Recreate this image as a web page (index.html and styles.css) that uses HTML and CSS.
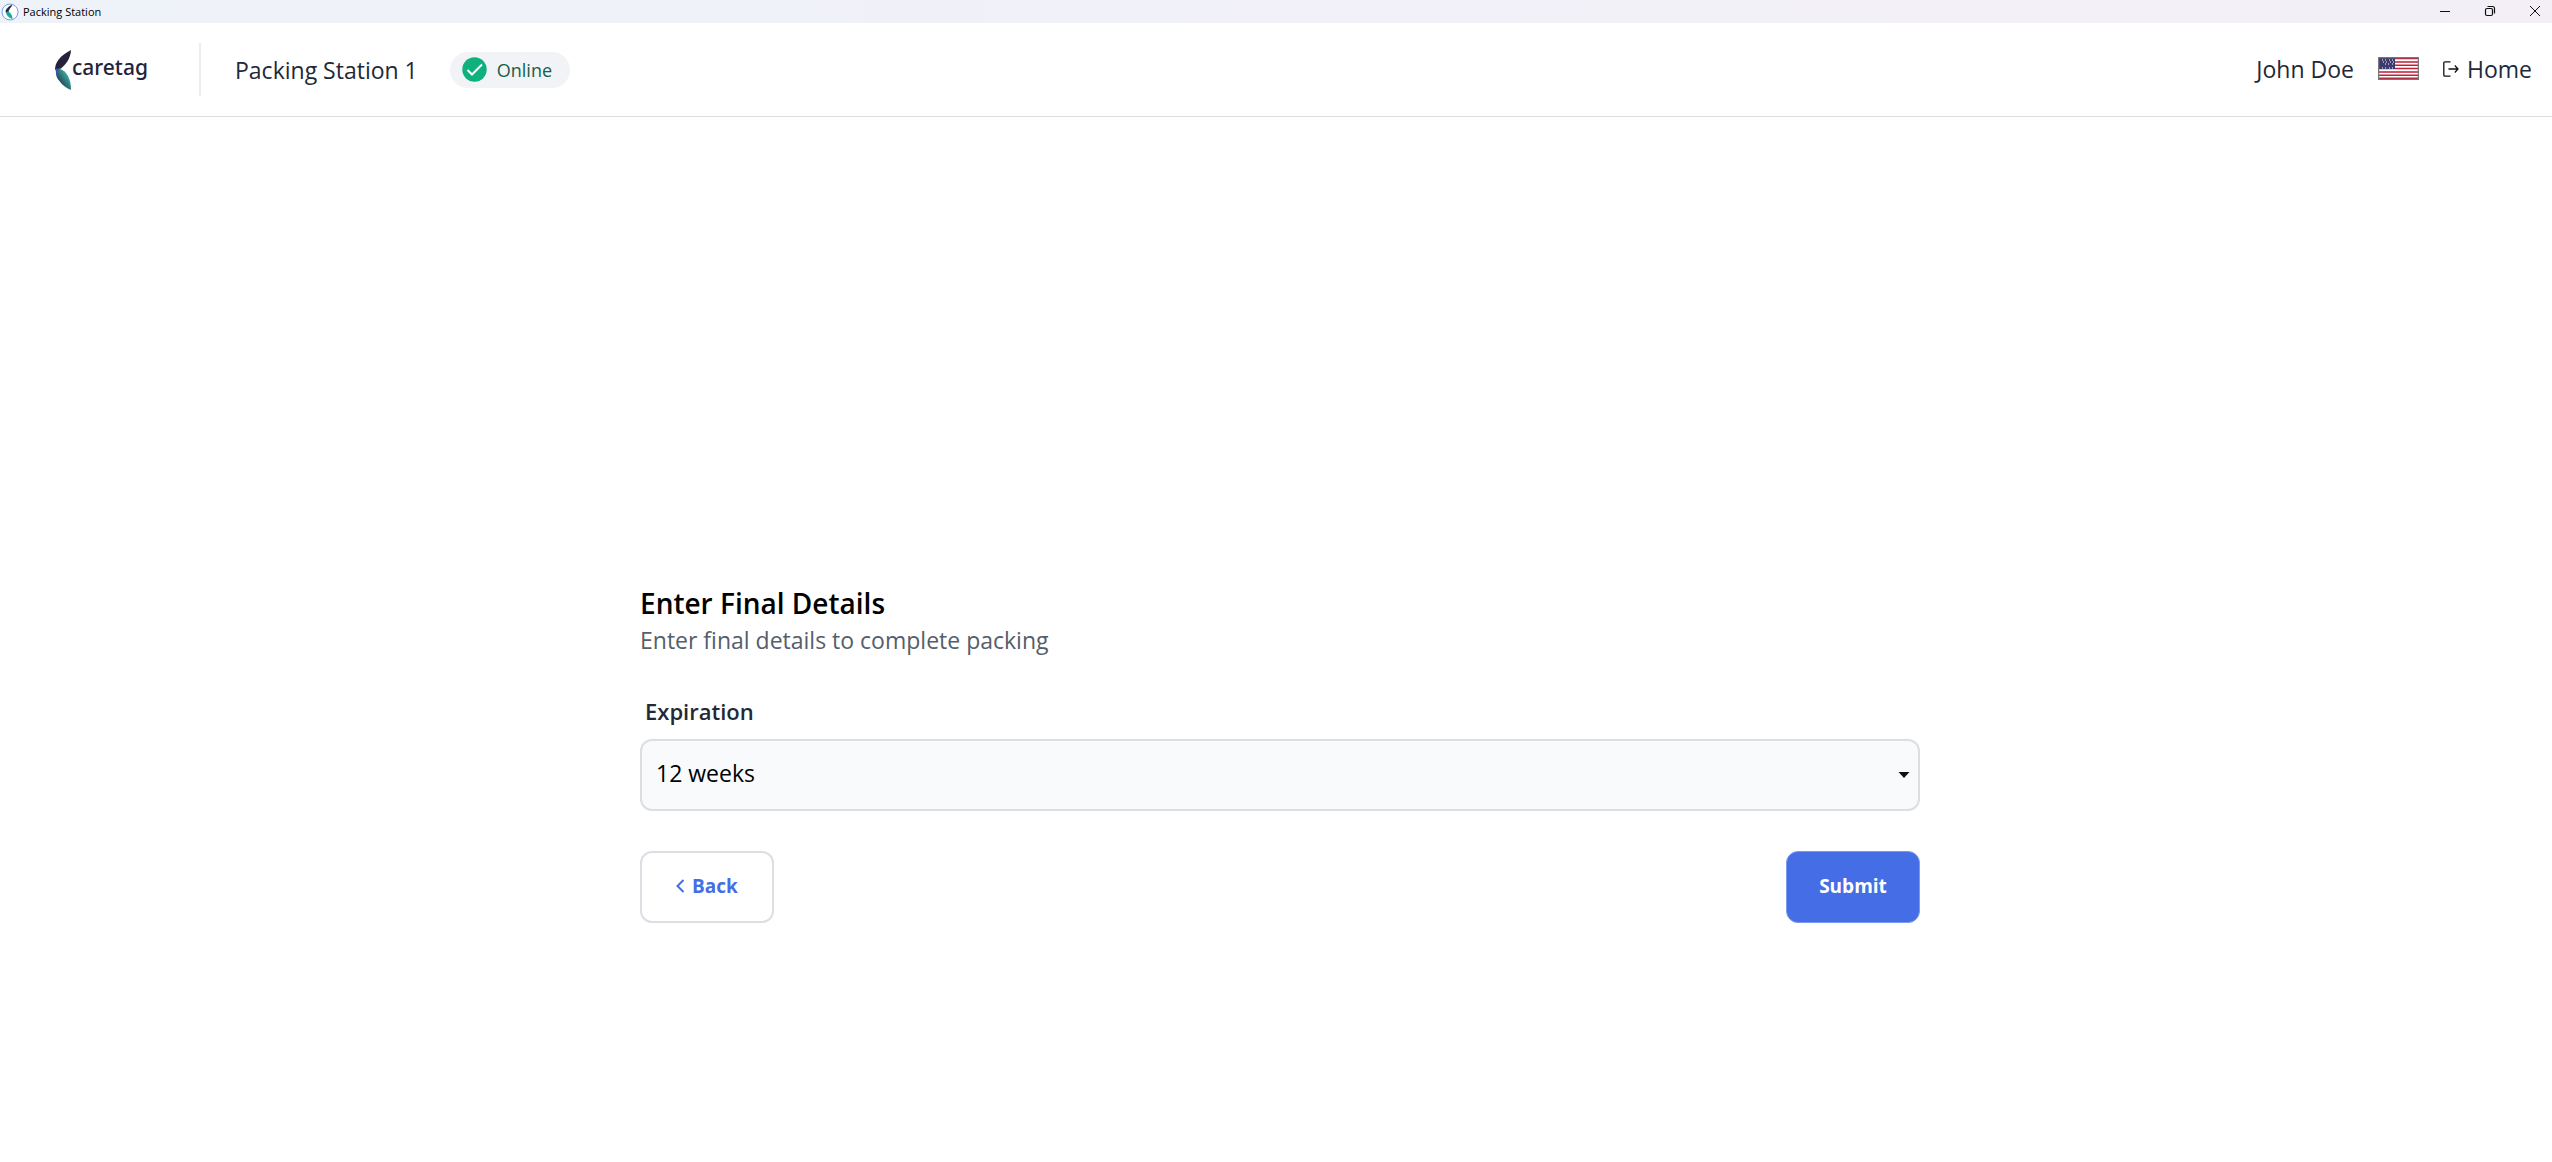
FILE: index.html
```html
<!DOCTYPE html>
<html lang="en">
<head>
<meta charset="utf-8">
<title>Packing Station</title>
<link rel="stylesheet" href="styles.css">
</head>
<body>
<div class="titlebar">
  <svg class="app-icon" width="18" height="18" viewBox="0 0 18 18" aria-hidden="true">
    <circle cx="9" cy="9" r="8" fill="#fff" stroke="#7d9be8" stroke-width="1"/>
    <path d="M11 2C7 4 4.500 6.500 5 9.500L7.500 8.500C7.500 6 9.500 5 11 2Z" fill="#22223a" stroke="#22223a" stroke-width="0.600"/>
    <path d="M5 9L7.500 8.500C10 10 11.500 13 11.500 16C7.500 14.500 5 12 5 9Z" fill="#19a79c"/>
  </svg>
  <span class="titlebar-text">Packing Station</span>
  <div class="window-controls">
    <button class="window-button" aria-label="Minimize"><svg width="12" height="12" viewBox="0 0 12 12"><path d="M1 6.500H11" stroke="#111" fill="none"/></svg></button>
    <button class="window-button" aria-label="Restore"><svg width="12" height="12" viewBox="0 0 12 12" fill="none" stroke="#111" stroke-width="1.200"><rect x="1.500" y="3.500" width="7" height="7" rx="1.500"/><path d="M3.500 1.500H8.500Q10.500 1.500 10.500 3.500V8.500"/></svg></button>
    <button class="window-button" aria-label="Close"><svg width="12" height="12" viewBox="0 0 12 12"><path d="M1 1L11 11M11 1L1 11" stroke="#111" fill="none"/></svg></button>
  </div>
</div>

<header class="header">
  <div class="brand">
    <svg width="17" height="40" viewBox="0 0 17 40" aria-hidden="true">
      <defs>
        <linearGradient id="leaf" x1="0" y1="1" x2="1" y2="0">
          <stop offset="0.200" stop-color="#23324d"/>
          <stop offset="0.800" stop-color="#3cb8a8"/>
        </linearGradient>
      </defs>
      <path d="M16 0C5 6 0 12 0 20L6 18.500C11 14 15.500 9 16 0Z" fill="#24233a"/>
      <path d="M0.500 18C1 23 1 28 4 30L4.500 19Z" fill="#3553b5"/>
      <path d="M4 18.500C12 21 16 29 16 40C7 36.500 1 28 1.500 23Z" fill="url(#leaf)"/>
    </svg>
    <span class="brand-name">caretag</span>
  </div>
  <div class="station">Packing Station 1</div>
  <div class="status">
    <svg width="25" height="25" viewBox="0 0 25 25" aria-hidden="true">
      <circle cx="12.500" cy="12.500" r="12.200" fill="#0eb17c"/>
      <path d="M5.500 13L10 17.500L20 7.500" fill="none" stroke="#fff" stroke-width="2"/>
    </svg>
    <span>Online</span>
  </div>
  <div class="account">
    <span>John Doe</span>
    <button class="language" aria-label="Language: English (US)">
      <svg width="41" height="23" viewBox="0 0 41 23">
        <rect width="41" height="23" fill="#fff"/>
        <path d="M0 1.500H41M0 5H41M0 8.300H41M0 11.600H41M0 14.900H41M0 18.200H41M0 21.300H41" stroke="#bd2038" stroke-width="1.500"/>
        <rect width="17" height="12" fill="#3c3b6e"/>
        <path d="M4 3H16M5 5H17M7 7H17M4 11H16" stroke="#fff" stroke-width="1" stroke-dasharray="1 2 1 3"/>
        <rect x="0.500" y="0.500" width="40" height="22" fill="none" stroke="#777" stroke-width="1.500"/>
      </svg>
    </button>
    <a class="home" href="#">
      <svg width="16" height="16" viewBox="0 0 16 16" fill="none" stroke="#111" stroke-width="1.300" aria-hidden="true"><path d="M7.500 0.800H2Q0.800 0.800 0.800 2V14Q0.800 15.200 2 15.200H7.500M5.500 8H15M11.800 4.500L15 8L11.800 11.500"/></svg>
      <span>Home</span>
    </a>
  </div>
</header>

<main class="main">
  <form class="details">
    <h1 class="title">Enter Final Details</h1>
    <p class="subtitle">Enter final details to complete packing</p>
    <label class="label" for="expiration">Expiration</label>
    <div class="select-box">
      <select class="select" id="expiration">
        <option>12 weeks</option>
      </select>
      <svg class="caret" width="12" height="6" viewBox="0 0 12 6" aria-hidden="true"><path d="M0.500 0H11.500L6 6Z" fill="#111"/></svg>
    </div>
    <div class="actions">
      <button class="button button-back" type="button">
        <svg width="8" height="14" viewBox="0 0 8 14" aria-hidden="true"><path d="M7.500 1L1.500 7L7.500 13" fill="none" stroke="#456ee6" stroke-width="2"/></svg>
        <span>Back</span>
      </button>
      <button class="button button-submit" type="submit">Submit</button>
    </div>
  </form>
</main>
</body>
</html>
```

FILE: styles.css
```css
* {
  box-sizing: border-box;
}

body {
  margin: 0;
  background: #fff;
  color: #1f2937;
  font: 23px/32px "Open Sans", "Noto Sans", sans-serif;
}

button,
select {
  font: inherit;
}

svg {
  display: block;
  flex: none;
}

.titlebar {
  display: flex;
  align-items: center;
  gap: 4px;
  height: 23px;
  padding-left: 1px;
  background: linear-gradient(90deg, #eef2f9, #f4eff7);
  color: #000;
  font-size: 11px;
  line-height: 16px;
}

.window-controls {
  display: flex;
  align-self: stretch;
  margin-left: auto;
}

.window-button {
  display: flex;
  align-items: center;
  justify-content: center;
  width: 45px;
  padding: 0 0 2px;
  border: 0;
  background: none;
}

.window-button:last-child {
  justify-content: flex-end;
  width: 40px;
  padding-right: 11px;
}

.header {
  display: flex;
  align-items: center;
  height: 94px;
  padding: 0 20px 0 55px;
  border-bottom: 1px solid #dcdde2;
}

.brand {
  display: flex;
  align-items: center;
  width: 146px;
  height: 53px;
  margin-right: 34px;
  border-right: 2px solid #ededf0;
}

.brand-name {
  padding-bottom: 6px;
  color: #24233a;
  font: 500 21px/28px "Noto Sans", sans-serif;
}

.status {
  display: flex;
  align-items: center;
  gap: 10px;
  height: 36px;
  margin-left: 32px;
  padding: 0 18px 0 12px;
  border-radius: 18px;
  background: #f2f3f6;
  color: #126149;
  font-size: 18px;
}

.account {
  display: flex;
  align-items: center;
  gap: 24px;
  margin-left: auto;
  padding-bottom: 2px;
}

.language {
  padding: 0;
  border: 0;
  background: none;
}

.home {
  display: flex;
  align-items: center;
  gap: 8px;
  color: inherit;
  text-decoration: none;
}

.main {
  padding: 468px 16px 40px 24px;
}

.details {
  max-width: 1280px;
  margin: 0 auto;
}

.title {
  margin: 0;
  color: #000;
  font-size: 28px;
  font-weight: 600;
  line-height: 36px;
}

.subtitle {
  margin: 0;
  padding-bottom: 34px;
  color: #555e6b;
  line-height: 38px;
}

.label {
  display: block;
  padding: 0 5px 10px;
  font-size: 22px;
  font-weight: 600;
  line-height: 36px;
}

.select-box {
  display: grid;
  align-items: center;
}

.select,
.caret {
  grid-area: 1 / 1;
}

.select {
  appearance: none;
  width: 100%;
  height: 72px;
  padding: 0 40px 4px 14px;
  border: 2px solid #dddee3;
  border-radius: 12px;
  background: #f9fafc;
  color: #000;
}

.caret {
  justify-self: end;
  margin-right: 10px;
  pointer-events: none;
}

.actions {
  display: flex;
  justify-content: space-between;
  padding-top: 40px;
}

.button {
  display: flex;
  align-items: center;
  justify-content: center;
  gap: 8px;
  min-width: 134px;
  height: 72px;
  padding: 0 32px 2px;
  border: 2px solid #dddee3;
  border-radius: 12px;
  background: #fff;
  color: #456ee6;
  font-size: 19px;
  font-weight: 700;
}

.button-submit {
  border: 1px solid #7b99ee;
  background: #456ee6;
  color: #fff;
}
```
